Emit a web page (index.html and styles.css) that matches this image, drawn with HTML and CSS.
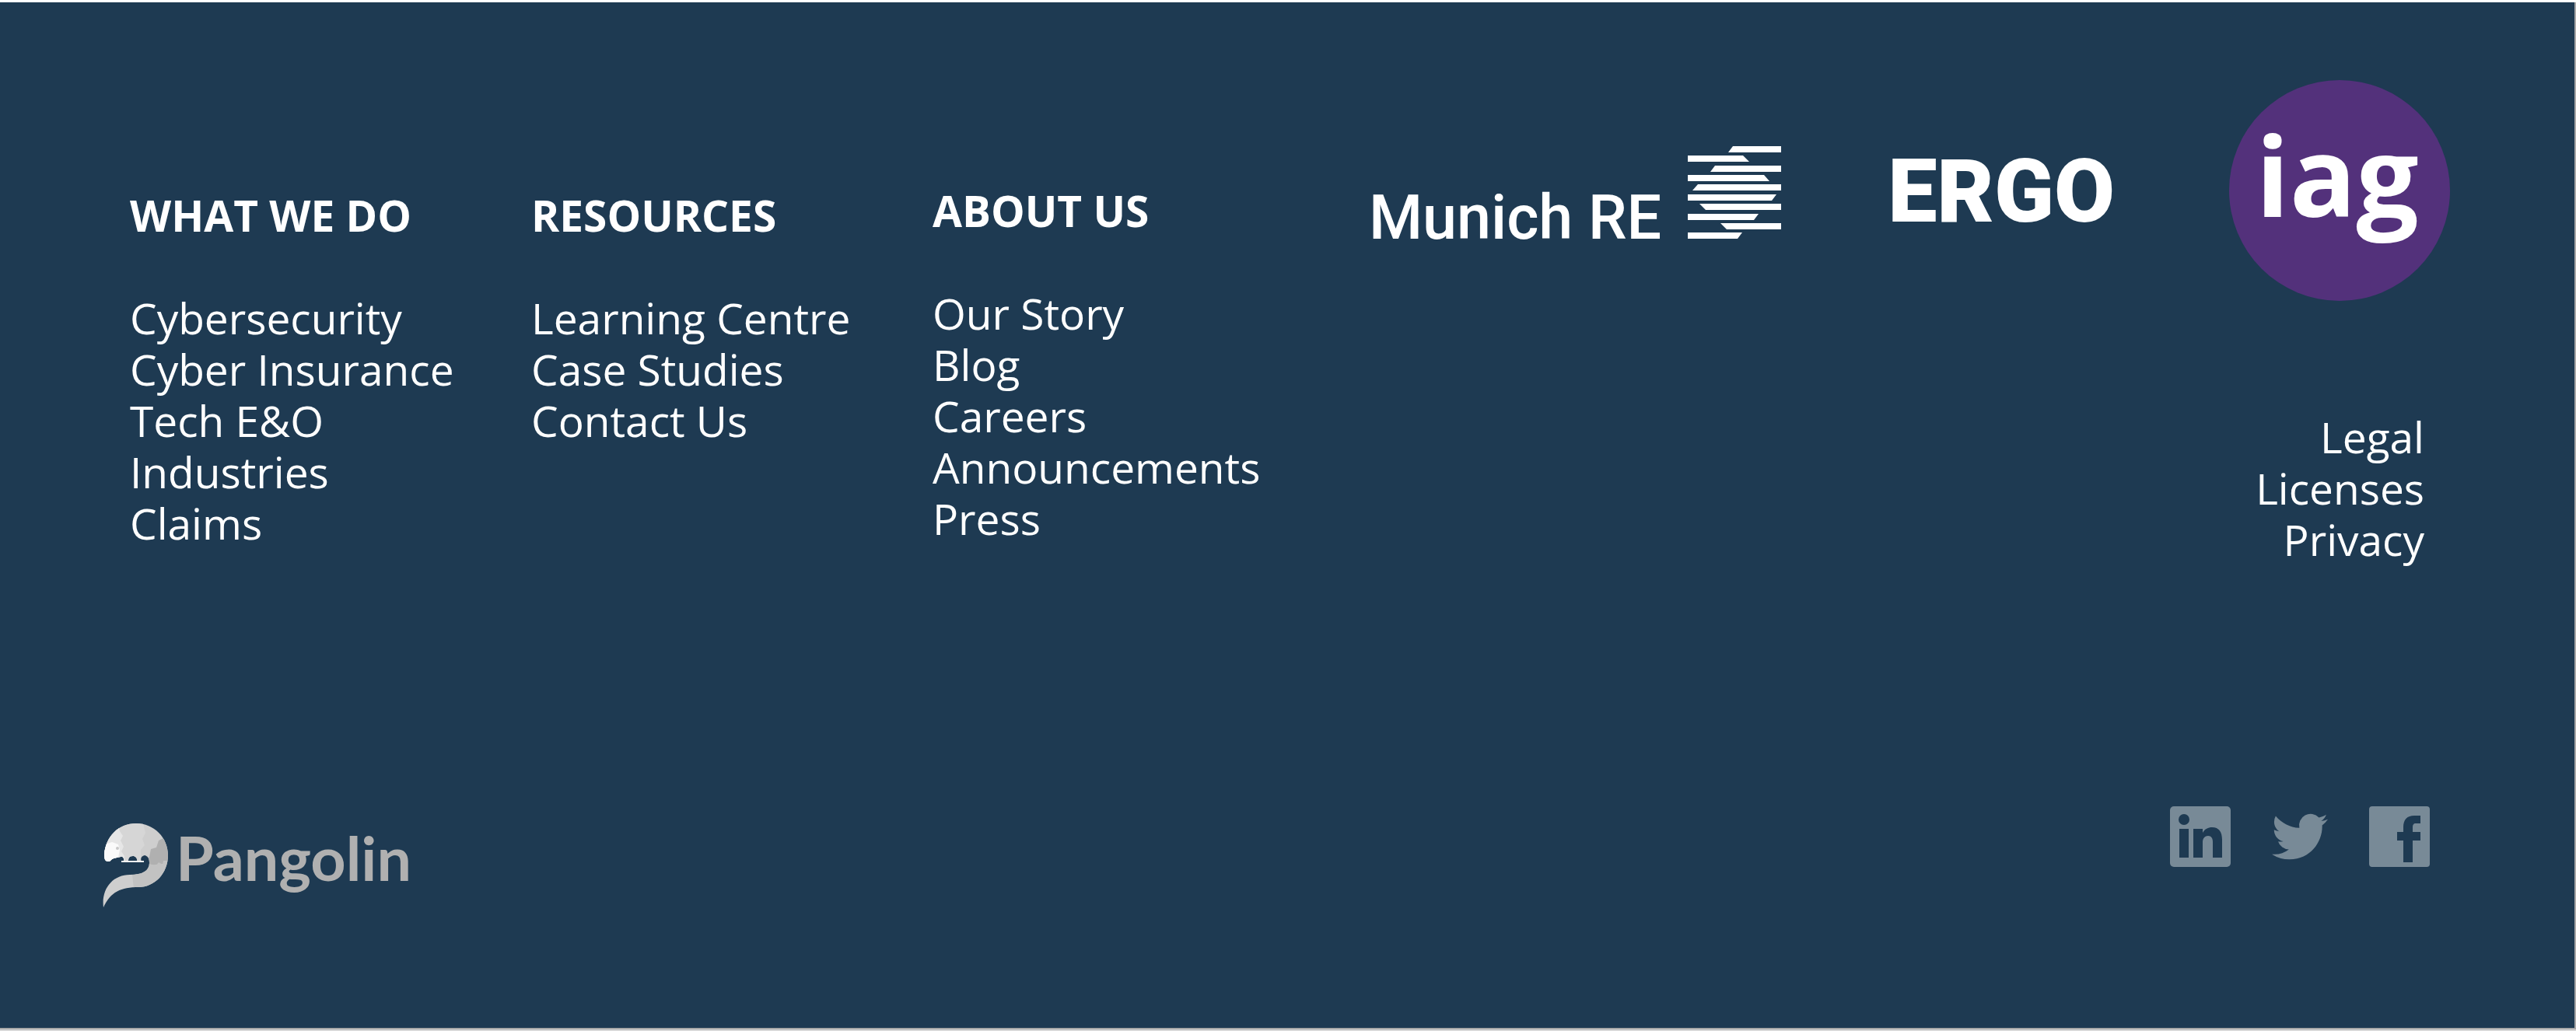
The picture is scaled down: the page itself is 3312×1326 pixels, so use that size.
FILE: index.html
```html
<!DOCTYPE html>
<html lang="en">
<head>
  <meta charset="utf-8">
  <meta name="viewport" content="width=device-width, initial-scale=1">
  <title>Pangolin</title>
  <link rel="stylesheet" href="styles.css">
</head>
<body>
  <footer class="footer">
    <div class="footer-main">
      <nav class="footer-nav" aria-label="Footer">
        <section class="nav-column">
          <h2 class="nav-heading">WHAT WE DO</h2>
          <ul class="link-list">
            <li><a href="#">Cybersecurity</a></li>
            <li><a href="#">Cyber Insurance</a></li>
            <li><a href="#">Tech E&amp;O</a></li>
            <li><a href="#">Industries</a></li>
            <li><a href="#">Claims</a></li>
          </ul>
        </section>
        <section class="nav-column">
          <h2 class="nav-heading">RESOURCES</h2>
          <ul class="link-list">
            <li><a href="#">Learning Centre</a></li>
            <li><a href="#">Case Studies</a></li>
            <li><a href="#">Contact Us</a></li>
          </ul>
        </section>
        <section class="nav-column nav-column-about">
          <h2 class="nav-heading">ABOUT US</h2>
          <ul class="link-list">
            <li><a href="#">Our Story</a></li>
            <li><a href="#">Blog</a></li>
            <li><a href="#">Careers</a></li>
            <li><a href="#">Announcements</a></li>
            <li><a href="#">Press</a></li>
          </ul>
        </section>
      </nav>

      <div class="footer-side">
        <div class="partners">
          <a class="partner-munich" href="#">
            <span>Munich RE</span>
            <svg class="munich-mark" viewBox="0 0 120 119" aria-hidden="true">
              <path d="M58 0H120V8H52ZM0 12H71L79 20H0ZM35 25H120V33H29ZM0 37H98L105 45H0ZM13 49H120V57H6ZM0 62H114L108 70H0ZM15 74H120V82H23ZM0 87H91L85 95H0ZM42 99H120V107H50ZM0 111H70L64 119H0Z"/>
            </svg>
          </a>
          <a class="partner-ergo" href="#">ERGO</a>
          <a class="partner-iag" href="#">iag</a>
        </div>
        <ul class="link-list legal">
          <li><a href="#">Legal</a></li>
          <li><a href="#">Licenses</a></li>
          <li><a href="#">Privacy</a></li>
        </ul>
      </div>
    </div>

    <div class="footer-bottom">
      <a class="brand" href="#">
        <svg class="brand-mark" viewBox="0 0 84 108" aria-hidden="true">
          <defs>
            <clipPath id="body">
              <path d="M7 49C3 49 2 45 2 40C4 17 20 0 43 0C66 0 84 18 84 41C84 64 67 82 46 82C24 82 10 88 1 108C-2 84 13 66 35 66C51 66 60 61 60 51C60 45 58 42 54 41C50 42 48 45 50 49H44C45 45 42 42 39 42C34 42 33 45 33 49H27C28 45 26 42 23 43C18 44 12 45 10 48C9 49 8 49 7 49Z"/>
            </clipPath>
          </defs>
          <g clip-path="url(#body)">
            <path fill="#cecece" d="M0 0H84V108H0Z"/>
            <path fill="#d6d6d6" d="M0 0H52L55 12L51 20L54 28L49 34V50H0Z"/>
            <path fill="#e6e6e6" d="M0 0H19L22 10L26 16L23 22L27 30L24 36L28 42V50H0Z"/>
            <path fill="#fafafa" d="M0 28L12 24L20 27L22 34L20 44L8 50H0Z"/>
            <path fill="#b0b0b0" d="M84 16L72 22L69 31L62 33L60 43L56 50L63 54L78 52L84 48Z"/>
            <path fill="#c2c2c2" d="M84 48L78 48L77 53L72 50L69 54L59 52L50 64L38 66L40 84H84Z"/>
          </g>
          <circle cx="19" cy="32" r="2" fill="#c8c8c8"/>
          <path fill="#f2f2f2" d="M24 48H53V50H24Z"/>
        </svg>
        <span>Pangolin</span>
      </a>

      <div class="social">
        <a href="#" aria-label="LinkedIn">
          <svg class="social-icon" viewBox="0 0 78 78" aria-hidden="true">
            <rect width="78" height="78" rx="5"/>
            <g class="cutout">
              <circle cx="18" cy="17" r="7"/>
              <path d="M12 29H24V66H12ZM30 29H42V34C45 29 49 27 54 27C63 27 67 33 67 43V66H55V46C55 41 53 38 49 38C45 38 42 41 42 46V66H30Z"/>
            </g>
          </svg>
        </a>
        <a href="#" aria-label="Twitter">
          <svg class="social-icon" viewBox="-1 -1 26 26" aria-hidden="true">
            <path d="M23.953 4.57a10 10 0 01-2.825.775 4.958 4.958 0 002.163-2.723c-.951.555-2.005.959-3.127 1.184a4.92 4.92 0 00-8.384 4.482C7.69 8.095 4.067 6.13 1.64 3.162a4.822 4.822 0 00-.666 2.475c0 1.71.87 3.213 2.188 4.096a4.904 4.904 0 01-2.228-.616v.06a4.923 4.923 0 003.946 4.827 4.996 4.996 0 01-2.212.085 4.936 4.936 0 004.604 3.417 9.867 9.867 0 01-6.102 2.105c-.39 0-.779-.023-1.17-.067a13.995 13.995 0 007.557 2.209c9.053 0 13.998-7.496 13.998-13.985 0-.21 0-.42-.015-.63A9.935 9.935 0 0024 4.59z"/>
          </svg>
        </a>
        <a href="#" aria-label="Facebook">
          <svg class="social-icon" viewBox="0 0 78 78" aria-hidden="true">
            <rect width="78" height="78" rx="4"/>
            <path class="cutout" d="M44 72V44H36V33H44V27C44 17 49 12 58 12H66V22H60C57 22 56 24 56 27V33H66V44H56V72Z"/>
          </svg>
        </a>
      </div>
    </div>
  </footer>
</body>
</html>
```
FILE: styles.css
```css
:root {
  --navy: #1e3a52;
  --muted: #788a97;
  --purple: #53317b;
  --edge: #a9a9a9;
}

* {
  box-sizing: border-box;
}

body {
  display: flex;
  flex-direction: column;
  min-height: 100vh;
  margin: 0;
  border-top: 3px solid #fff;
  border-bottom: 2px solid #d8d8d8;
  background: var(--navy);
  color: #fff;
  font-family: "Open Sans", "Noto Sans", sans-serif;
  font-size: 55px;
  line-height: 66px;
}

a {
  color: inherit;
  text-decoration: none;
}

svg {
  display: block;
}

.footer {
  flex: 1;
  display: flex;
  flex-direction: column;
  justify-content: space-between;
  gap: 80px;
  padding: 100px 160px 155px 132px;
  border-right: 2px solid var(--edge);
  border-bottom: 2px solid var(--edge);
}

.footer-main {
  display: grid;
  grid-template-columns: 1628fr 1390fr;
}

.footer-nav {
  display: grid;
  grid-template-columns: 516fr 516fr 561fr;
  padding-left: 35px;
}

.nav-column {
  padding-top: 141px;
}

.nav-column-about {
  padding-top: 135px;
}

.nav-heading {
  margin: 0 0 66px;
  font-size: 55px;
  font-weight: 700;
}

.link-list {
  margin: 0;
  padding: 0;
  list-style: none;
}

.link-list a {
  display: block;
}

.partners {
  display: flex;
  align-items: center;
  justify-content: space-between;
}

.partner-munich {
  display: flex;
  align-items: flex-end;
  gap: 34px;
  padding-top: 4px;
  font-family: Roboto, sans-serif;
  font-size: 79px;
  font-weight: 500;
  line-height: 54px;
}

.munich-mark {
  width: 120px;
  fill: #fff;
}

.partner-ergo {
  padding: 4px 10px 0 0;
  font-family: Roboto, sans-serif;
  font-size: 113px;
  font-weight: 900;
  line-height: 114px;
}

.partner-iag {
  width: 284px;
  height: 284px;
  padding-right: 6px;
  border-radius: 50%;
  background: var(--purple);
  font-size: 142px;
  font-weight: 700;
  line-height: 242px;
  text-align: center;
}

.legal {
  padding: 142px 33px 0 0;
  text-align: right;
}

.footer-bottom {
  display: flex;
  align-items: flex-start;
  justify-content: space-between;
}

.brand {
  display: flex;
  align-items: flex-start;
  gap: 10px;
  padding-top: 22px;
  color: #b0b0b0;
  font-family: Lato, sans-serif;
  font-size: 79px;
  font-weight: 700;
  line-height: 88px;
}

.brand-mark {
  width: 84px;
}

.social {
  display: flex;
  gap: 50px;
  padding-right: 26px;
}

.social-icon {
  width: 78px;
  height: 78px;
  fill: var(--muted);
}

.cutout {
  fill: var(--navy);
}
```
